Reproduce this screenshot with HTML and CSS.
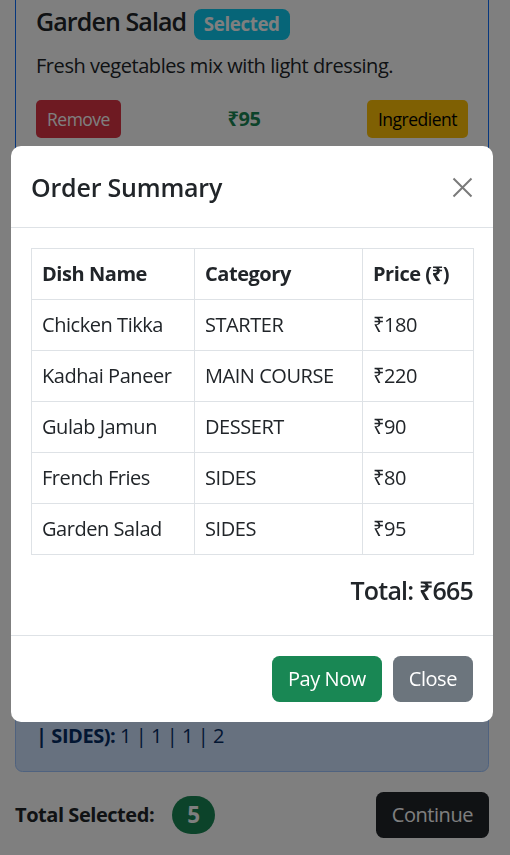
FILE: index.html
```html
<!DOCTYPE html>
<html lang="en">
<head>
<meta charset="utf-8">
<title>Order Summary</title>
<link rel="stylesheet" href="styles.css">
</head>
<body>
<main class="page">
  <div class="dish-card">
    <h5 class="dish-title">Garden Salad <span class="badge badge-info">Selected</span></h5>
    <p class="dish-text">Fresh vegetables mix with light dressing.</p>
    <div class="dish-actions">
      <button class="btn btn-sm btn-danger">Remove</button>
      <span class="dish-price">₹95</span>
      <button class="btn btn-sm btn-warning">Ingredient</button>
    </div>
  </div>
  <div class="summary-alert">
    <p class="summary-line"><strong>Count (STARTER | MAIN COURSE | DESSERT<br>| SIDES):</strong> 1 | 1 | 1 | 2</p>
  </div>
  <div class="total-row">
    <div class="total-left"><strong>Total Selected:</strong><span class="badge badge-count">5</span></div>
    <button class="btn btn-dark">Continue</button>
  </div>
</main>

<div class="modal">
  <div class="modal-dialog">
    <div class="modal-header">
      <h5 class="modal-title">Order Summary</h5>
      <button class="btn-close" aria-label="Close">
        <svg width="21" height="21" viewBox="0 0 21 21"><path d="M1.5 1.5 L19.5 19.5 M19.5 1.5 L1.5 19.5" stroke="#7a7a7a" stroke-width="2" fill="none"/></svg>
      </button>
    </div>
    <div class="modal-body">
      <table class="order-table">
        <thead>
          <tr><th class="col-name">Dish Name</th><th class="col-cat">Category</th><th class="col-price">Price (₹)</th></tr>
        </thead>
        <tbody>
          <tr><td>Chicken Tikka</td><td>STARTER</td><td>₹180</td></tr>
          <tr><td>Kadhai Paneer</td><td>MAIN COURSE</td><td>₹220</td></tr>
          <tr><td>Gulab Jamun</td><td>DESSERT</td><td>₹90</td></tr>
          <tr><td>French Fries</td><td>SIDES</td><td>₹80</td></tr>
          <tr><td>Garden Salad</td><td>SIDES</td><td>₹95</td></tr>
        </tbody>
      </table>
      <h5 class="order-total">Total: ₹665</h5>
    </div>
    <div class="modal-footer">
      <button class="btn btn-success">Pay Now</button>
      <button class="btn btn-secondary">Close</button>
    </div>
  </div>
</div>
</body>
</html>
```
FILE: styles.css
```css
* { box-sizing: border-box; }
html, body { margin: 0; }
body {
  font-family: "Open Sans", "Noto Sans", sans-serif;
  font-size: 20px;
  line-height: 30px;
  letter-spacing: -0.45px;
  color: #212529;
  background: #fff;
  width: 510px;
  height: 855px;
  overflow: hidden;
}
h5, p { margin: 0; }

.page {
  display: flex;
  flex-direction: column;
  padding: 0 21px 0 15px;
}

/* dish card */
.dish-card {
  border: 1px solid #0d6efd;
  border-top: 0;
  border-radius: 0 0 7.5px 7.5px;
  padding: 6px 20px 20px;
}
.dish-title {
  font-size: 25px;
  line-height: 30px;
  font-weight: 600;
  letter-spacing: -0.9px;
  margin-bottom: 11px;
}
.dish-text { margin-bottom: 19px; }
.dish-actions {
  display: flex;
  justify-content: space-between;
  align-items: center;
}
.dish-price {
  font-weight: 700;
  color: #198754;
}

/* badges */
.badge {
  display: inline-block;
  font-weight: 700;
  line-height: 1;
  color: #fff;
  text-align: center;
  white-space: nowrap;
  vertical-align: baseline;
}
.badge-info {
  font-size: 18.75px;
  letter-spacing: -0.4px;
  padding: 6.5px 10px;
  margin-left: 2px;
  border-radius: 7.5px;
  background: #0dcaf0;
}
.badge-count {
  font-size: 22.5px;
  padding: 7.9px 15px;
  border-radius: 50px;
  background: #198754;
  margin-left: 18px;
}

/* buttons */
.btn {
  font-family: inherit;
  font-size: 20px;
  line-height: 30px;
  letter-spacing: -0.45px;
  padding: 7px 15px;
  border: 1px solid transparent;
  border-radius: 7.5px;
  color: #fff;
  cursor: pointer;
}
.btn-sm {
  font-size: 17.5px;
  line-height: 26px;
  letter-spacing: -0.5px;
  padding: 5px 10px;
  border-radius: 5px;
}
.btn-danger { background: #dc3545; }
.btn-warning { background: #ffc107; color: #000; }
.btn-success { background: #198754; }
.btn-secondary { background: #6c757d; }
.btn-dark { background: #212529; }

/* summary alert */
.summary-alert {
  margin-top: 20px;
  height: 593px;
  display: flex;
  flex-direction: column;
  justify-content: flex-end;
  padding: 20px;
  border: 1px solid #9ec5fe;
  border-radius: 7.5px;
  background: #cfe2ff;
  color: #052c65;
}

.total-row {
  margin-top: 20px;
  display: flex;
  justify-content: space-between;
  align-items: center;
}
.total-left {
  display: flex;
  align-items: center;
}

/* modal */
.modal {
  position: fixed;
  inset: 0;
  background: rgba(0, 0, 0, 0.5);
  padding: 146px 17px 0 11px;
}
.modal-dialog {
  width: 482px;
  background: #fff;
  border-radius: 10px;
  overflow: hidden;
}
.modal-header {
  display: flex;
  align-items: center;
  justify-content: space-between;
  padding: 22px 20px 21px;
  border-bottom: 1px solid #dee2e6;
}
.modal-title {
  font-size: 25px;
  line-height: 38px;
  font-weight: 600;
  letter-spacing: -0.2px;
}
.btn-close {
  width: 21px;
  height: 21px;
  padding: 0;
  border: 0;
  background: transparent;
  display: flex;
}
.modal-body { padding: 20px; }
.order-table {
  width: 442px;
  border-collapse: collapse;
  table-layout: fixed;
  margin-bottom: 20px;
}
.order-table th,
.order-table td {
  border: 1px solid #dee2e6;
  padding: 10px;
  line-height: 30px;
  text-align: left;
  white-space: nowrap;
}
.order-table th { font-weight: 700; }
.col-name { width: 163px; }
.col-cat { width: 168px; }
.col-price { width: 111px; }
.order-total {
  font-size: 25px;
  line-height: 30px;
  font-weight: 600;
  letter-spacing: -0.8px;
  text-align: right;
  margin-bottom: 10px;
}
.modal-footer {
  display: flex;
  justify-content: flex-end;
  gap: 11px;
  padding: 20px;
  border-top: 1px solid #dee2e6;
}
```
